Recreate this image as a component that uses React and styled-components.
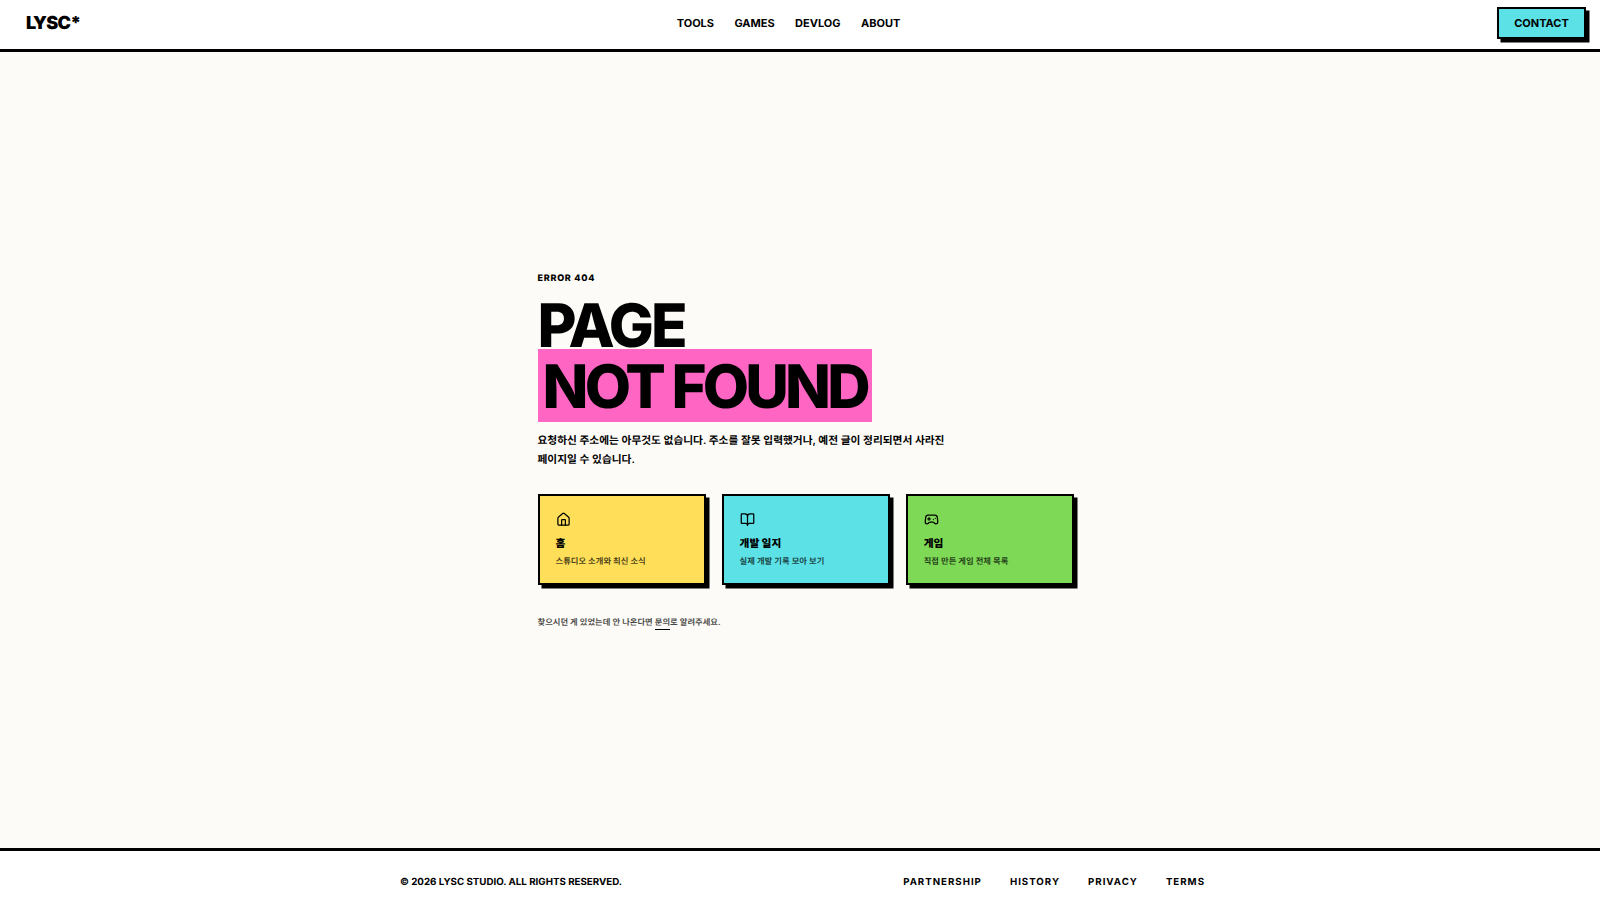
import React from "react";
import styled, { createGlobalStyle } from "styled-components";
import { Home, BookOpen, Gamepad2 } from "lucide-react";

const Global = createGlobalStyle`
  html, body { margin: 0; padding: 0; }
  body { font-family: Inter, "Noto Sans CJK KR", sans-serif; color: #000; background: #fdfbf7; text-rendering: geometricPrecision; }
  * { box-sizing: border-box; }
`;
const Page = styled.div`
  height: 911px; display: flex; flex-direction: column;
`;
const Header = styled.header`
  height: 52px; flex: none; background: #fff; border-bottom: 3px solid #000;
  display: grid; grid-template-columns: 1fr auto 1fr; align-items: center;
  padding: 0 14px 3px 26px;
`;
const Logo = styled.div`
  font-size: 18px; font-weight: 900; letter-spacing: -0.72px; line-height: 1; padding-top: 2px;
`;
const Nav = styled.nav`
  display: flex; gap: 20.4px; margin-right: 35px;
`;
const NavLink = styled.a`
  font-size: 11px; font-weight: 700; line-height: 16px;
`;
const HeaderEnd = styled.div`
  display: flex; justify-content: flex-end;
`;
const ContactButton = styled.button`
  width: 89px; height: 32px; padding: 0; margin-bottom: 1px; background: #5ce1e6; color: #000;
  border: 2px solid #000; box-shadow: 3.5px 3.5px 0 #000;
  font: 700 11px Inter, sans-serif;
`;
const Main = styled.main`
  flex: 1; display: flex; flex-direction: column; justify-content: center;
  padding: 0 0 0 537.5px;
`;
const Eyebrow = styled.div`
  font-size: 9px; font-weight: 800; letter-spacing: 0.75px; line-height: 18px; margin-bottom: 15px;
`;
const Title = styled.h1`
  margin: 0 0 9px; font-size: 60px; font-weight: 800; letter-spacing: -3px; line-height: 46px;
`;
const Highlight = styled.span`
  display: block; width: fit-content; height: 72.5px; padding: 8px 5px 0; background: #ff66c4;
  line-height: 60px; letter-spacing: -3.8px;
`;
const Lead = styled.p`
  margin: 0 0 25px; width: 420px; font-size: 10.7px; font-weight: 600; line-height: 19px; word-break: keep-all;
`;
const Cards = styled.div`
  display: flex; gap: 15.4px;
`;
const Card = styled.a`
  width: 168.7px; height: 90.6px; padding: 16px 16px 14px; border: 2px solid #000;
  box-shadow: 3.5px 3.5px 0 #000; background: ${p => p.$bg};
  display: flex; flex-direction: column;
`;
const IconWrap = styled.span`
  display: block; height: 16px; margin-bottom: 9px;
  svg { display: block; width: 15px; height: 15px; stroke-width: 2; }
`;
const CardTitle = styled.div`
  font-size: 10.7px; font-weight: 800; line-height: 16px; margin-bottom: 3px;
`;
const CardText = styled.div`
  font-size: 8.3px; font-weight: 600; line-height: 14px; color: rgba(0,0,0,.72);
`;
const Note = styled.p`
  margin: 31px 0 0; font-size: 8.3px; font-weight: 600; line-height: 14px; color: rgba(0,0,0,.72);
  a { color: inherit; border-bottom: 1px solid #000; padding-bottom: 1px; }
`;
const Footer = styled.footer`
  height: 63px; flex: none; background: #fff; border-top: 3px solid #000;
  display: flex; align-items: center; justify-content: space-between;
  padding: 3px 395px 0 400px;
`;
const Copy = styled.div`
  font-size: 9.75px; font-weight: 700; line-height: 14px;
`;
const FootNav = styled.nav`
  display: flex; gap: 28px;
`;
const FootLink = styled.a`
  font-size: 9.7px; font-weight: 700; letter-spacing: 1px; line-height: 14px;
`;

export default function App() {
  return (
    <Page>
      <Global />
      <Header>
        <Logo>LYSC*</Logo>
        <Nav>
          <NavLink>TOOLS</NavLink><NavLink>GAMES</NavLink><NavLink>DEVLOG</NavLink><NavLink>ABOUT</NavLink>
        </Nav>
        <HeaderEnd><ContactButton>CONTACT</ContactButton></HeaderEnd>
      </Header>
      <Main>
        <Eyebrow>ERROR 404</Eyebrow>
        <Title>PAGE<Highlight>NOT FOUND</Highlight></Title>
        <Lead>요청하신 주소에는 아무것도 없습니다. 주소를 잘못 입력했거나, 예전 글이 정리되면서 사라진 페이지일 수 있습니다.</Lead>
        <Cards>
          <Card $bg="#ffde59"><IconWrap><Home /></IconWrap><CardTitle>홈</CardTitle><CardText>스튜디오 소개와 최신 소식</CardText></Card>
          <Card $bg="#5ce1e6"><IconWrap><BookOpen /></IconWrap><CardTitle>개발 일지</CardTitle><CardText>실제 개발 기록 모아 보기</CardText></Card>
          <Card $bg="#7ed957"><IconWrap><Gamepad2 /></IconWrap><CardTitle>게임</CardTitle><CardText>직접 만든 게임 전체 목록</CardText></Card>
        </Cards>
        <Note>찾으시던 게 있었는데 안 나온다면 <a>문의</a>로 알려주세요.</Note>
      </Main>
      <Footer>
        <Copy>© 2026 LYSC STUDIO. ALL RIGHTS RESERVED.</Copy>
        <FootNav><FootLink>PARTNERSHIP</FootLink><FootLink>HISTORY</FootLink><FootLink>PRIVACY</FootLink><FootLink>TERMS</FootLink></FootNav>
      </Footer>
    </Page>
  );
}
